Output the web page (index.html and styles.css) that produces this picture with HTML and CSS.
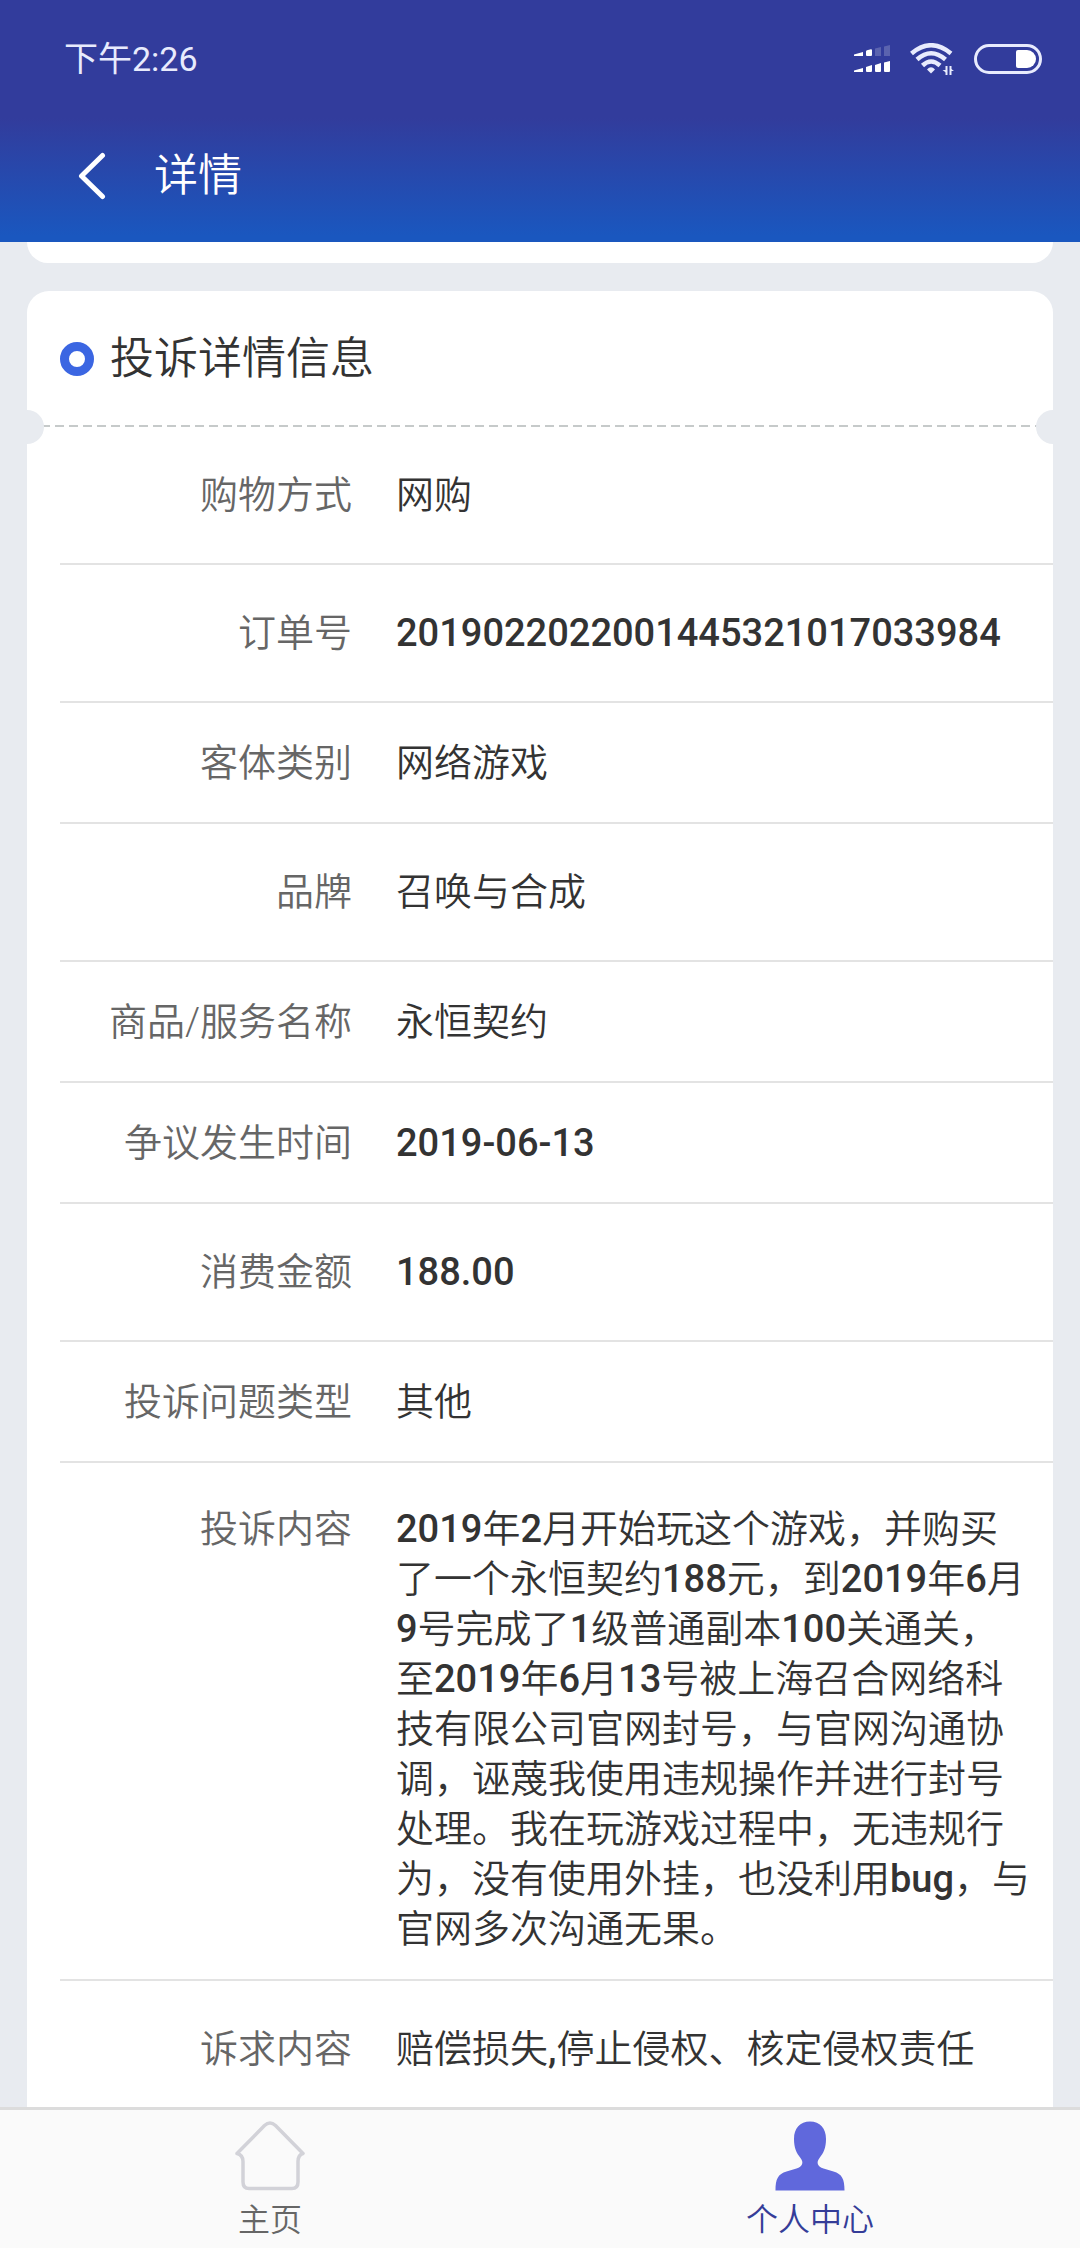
FILE: index.html
```html
<!DOCTYPE html>
<html lang="zh-CN">
<head>
<meta charset="utf-8">
<meta name="viewport" content="width=device-width, initial-scale=1">
<title>详情</title>
<link rel="stylesheet" href="styles.css">
</head>
<body>
<header class="top">
  <div class="status">
    <span class="clock">下午2:26</span>
    <div class="status-icons">
      <svg class="signal" width="36" height="28" viewBox="0 0 36 28" fill="#fff" aria-hidden="true">
        <path d="M0 11V9.500L9 7v4z"/><path d="M12 6.500q0-1 1-1.200l4-1q1 0 1 1V10q0 1-1 1h-4q-1 0-1-1z"/>
        <path opacity=".2" d="M21 3.500l6-1.500v9h-6zM30 1.500L36 0v11h-6z"/>
        <path d="M0 27v-1.500L9 23v4z"/><path d="M12 22l6-2v6q0 1-1 1h-4q-1 0-1-1zM21 20l6-2v8q0 1-1 1h-4q-1 0-1-1zM30 17.500L36 16v10q0 1-1 1h-4q-1 0-1-1z"/>
      </svg>
      <svg class="wifi" width="44" height="32" viewBox="0 0 44 32" fill="none" stroke="#e8ebfd" stroke-width="4.500" aria-hidden="true">
        <path d="M1.500 10.500Q21 -6 41 10.500M7 16.500Q21 4 35.500 16.500M12.500 22.500Q21 14.500 30 22.500"/>
        <path d="M21 30.500l-4-4q4-4.500 8 0z" fill="#e8ebfd" stroke="none"/>
        <path stroke-width="2" d="M36.500 23v9M40.500 32v-9"/>
        <path d="M32.500 27h4v3zM44 28h-4v-3z" fill="#e8ebfd" stroke="none"/>
      </svg>
      <svg class="battery" width="68" height="30" viewBox="0 0 68 30" aria-hidden="true">
        <rect x="1.500" y="1.500" width="65" height="27" rx="13.500" fill="none" stroke="#e8ebfd" stroke-width="3"/>
        <path d="M44 6h9a9 9 0 0 1 0 18h-9q-2 0-2-2V8q0-2 2-2z" fill="#fff"/>
      </svg>
    </div>
  </div>
  <div class="navbar">
    <button class="back" type="button" aria-label="返回">
      <svg width="28" height="48" viewBox="0 0 28 48" fill="none" stroke="#fff" stroke-width="5" stroke-linecap="round" stroke-linejoin="round" aria-hidden="true"><path d="M24.500 3.500L3.500 24l21 20.500"/></svg>
    </button>
    <h1 class="page-title">详情</h1>
  </div>
</header>

<main class="content">
  <section class="card card-previous"></section>
  <section class="card">
    <div class="card-head">
      <span class="ring"></span>
      <h2 class="card-title">投诉详情信息</h2>
    </div>
    <dl class="details">
      <div class="row row-tall"><dt>购物方式</dt><dd>网购</dd></div>
      <div class="row row-tall"><dt>订单号</dt><dd><b>2019022022001445321017033984</b></dd></div>
      <div class="row"><dt>客体类别</dt><dd>网络游戏</dd></div>
      <div class="row row-tall"><dt>品牌</dt><dd>召唤与合成</dd></div>
      <div class="row"><dt>商品/服务名称</dt><dd>永恒契约</dd></div>
      <div class="row"><dt>争议发生时间</dt><dd><b>2019-06-13</b></dd></div>
      <div class="row row-tall"><dt>消费金额</dt><dd><b>188.00</b></dd></div>
      <div class="row"><dt>投诉问题类型</dt><dd>其他</dd></div>
      <div class="row row-text"><dt>投诉内容</dt><dd><b>2019</b>年<b>2</b>月开始玩这个游戏，并购买<br>了一个永恒契约<b>188</b>元，到<b>2019</b>年<b>6</b>月<br><b>9</b>号完成了<b>1</b>级普通副本<b>100</b>关通关，<br>至<b>2019</b>年<b>6</b>月<b>13</b>号被上海召合网络科<br>技有限公司官网封号，与官网沟通协<br>调，诬蔑我使用违规操作并进行封号<br>处理。我在玩游戏过程中，无违规行<br>为，没有使用外挂，也没利用<b>bug</b>，与<br>官网多次沟通无果。</dd></div>
      <div class="row row-tall"><dt>诉求内容</dt><dd>赔偿损失<b>,</b>停止侵权、核定侵权责任</dd></div>
    </dl>
  </section>
</main>

<nav class="tabs">
  <a class="tab" href="#home">
    <svg width="70" height="70" viewBox="0 0 70 70" fill="none" stroke="#d2d2d8" stroke-width="3.500" stroke-linejoin="round" aria-hidden="true"><path d="M2 32.500L29.500 4.500q5.500-5 11 0L68 32.500q-5 1.500-5 8V61q0 6.500-6 6.500H14q-6 0-6-6.500V40.500q0-6.500-6-8z"/></svg>
    <span>主页</span>
  </a>
  <a class="tab tab-active" href="#me" aria-current="page">
    <svg width="70" height="70" viewBox="0 0 70 70" fill="#6068dc" aria-hidden="true"><path d="M35 0.500C45 .5 51 7 51 18c0 9-2.500 14-6.500 19-3.500 4.500-2 8.500 4 10.500l10 3C67 53 69.500 58 69.500 69.500H.5C.5 58 3 53 11.500 50.500l10-3c6-2 7.500-6 4-10.500C21.500 32 19 27 19 18 19 7 25 .5 35 .5z"/></svg>
    <span>个人中心</span>
  </a>
</nav>
</body>
</html>
```

FILE: styles.css
```css
* { box-sizing: border-box; }

body {
  margin: 0;
  height: 100vh;
  display: flex;
  flex-direction: column;
  background: #e8ebf0;
  color: #333;
  font-family: Roboto, "Noto Sans CJK SC", sans-serif;
  font-size: 38px;
  font-weight: 350;
  line-height: 50px;
}

h1, h2, dl, dd { margin: 0; font-weight: 350; }

.top {
  flex: none;
  color: #fff;
  background: linear-gradient(#323c9c 118px, #1a57bf 236px);
}

.status {
  height: 118px;
  padding: 0 38px 0 64px;
  display: flex;
  align-items: center;
  justify-content: space-between;
}

.clock { font-size: 34px; font-weight: 400; color: #e8ebfd; }

.status-icons { display: flex; align-items: center; gap: 20px; }

.navbar {
  height: 124px;
  padding: 0 78px 8px;
  display: flex;
  align-items: center;
  gap: 48px;
}

.back {
  display: flex;
  padding: 0;
  border: 0;
  background: none;
}

.page-title, .card-title { font-size: 44px; }

.content {
  flex: 1;
  min-height: 0;
  overflow-y: auto;
  scrollbar-width: none;
  padding: 0 27px;
}

.card { padding-bottom: 28px; background: #fff; border-radius: 22px; }

.card-previous {
  height: 21px;
  margin-bottom: 28px;
  padding: 0;
  border-radius: 0 0 22px 22px;
}

.card-head {
  position: relative;
  height: 136px;
  padding: 0 33px;
  display: flex;
  align-items: center;
  gap: 16px;
  background: repeating-linear-gradient(90deg, #c6caca 0 9px, transparent 9px 14px) bottom / 100% 2px no-repeat;
}

.card-head::before,
.card-head::after {
  content: "";
  position: absolute;
  bottom: -17px;
  width: 17px;
  height: 34px;
  background: #e8ebf0;
}

.card-head::before { left: 0; border-radius: 0 17px 17px 0; }
.card-head::after { right: 0; border-radius: 17px 0 0 17px; }

.ring {
  width: 34px;
  height: 34px;
  border: 9px solid #3b66e2;
  border-radius: 50%;
}

.details { padding-left: 33px; }

.row {
  min-height: 121px;
  display: grid;
  grid-template-columns: 292px 1fr;
  column-gap: 44px;
  align-items: center;
  border-bottom: 2px solid #e3e3e3;
}

.row-tall { min-height: 138px; }

.row-text {
  padding: 41px 0 25px;
  align-items: start;
}

dt { color: #666; text-align: right; }
dd { white-space: nowrap; }
b { font-weight: 500; }

.tabs {
  flex: none;
  height: 141px;
  display: flex;
  border-top: 3px solid #dcdcdc;
  background: #fafafa;
}

.tab {
  flex: 1;
  padding-top: 11px;
  display: flex;
  flex-direction: column;
  align-items: center;
  gap: 4px;
  color: #666;
  font-size: 32px;
  text-decoration: none;
}

.tab-active { color: #353d98; }
```
